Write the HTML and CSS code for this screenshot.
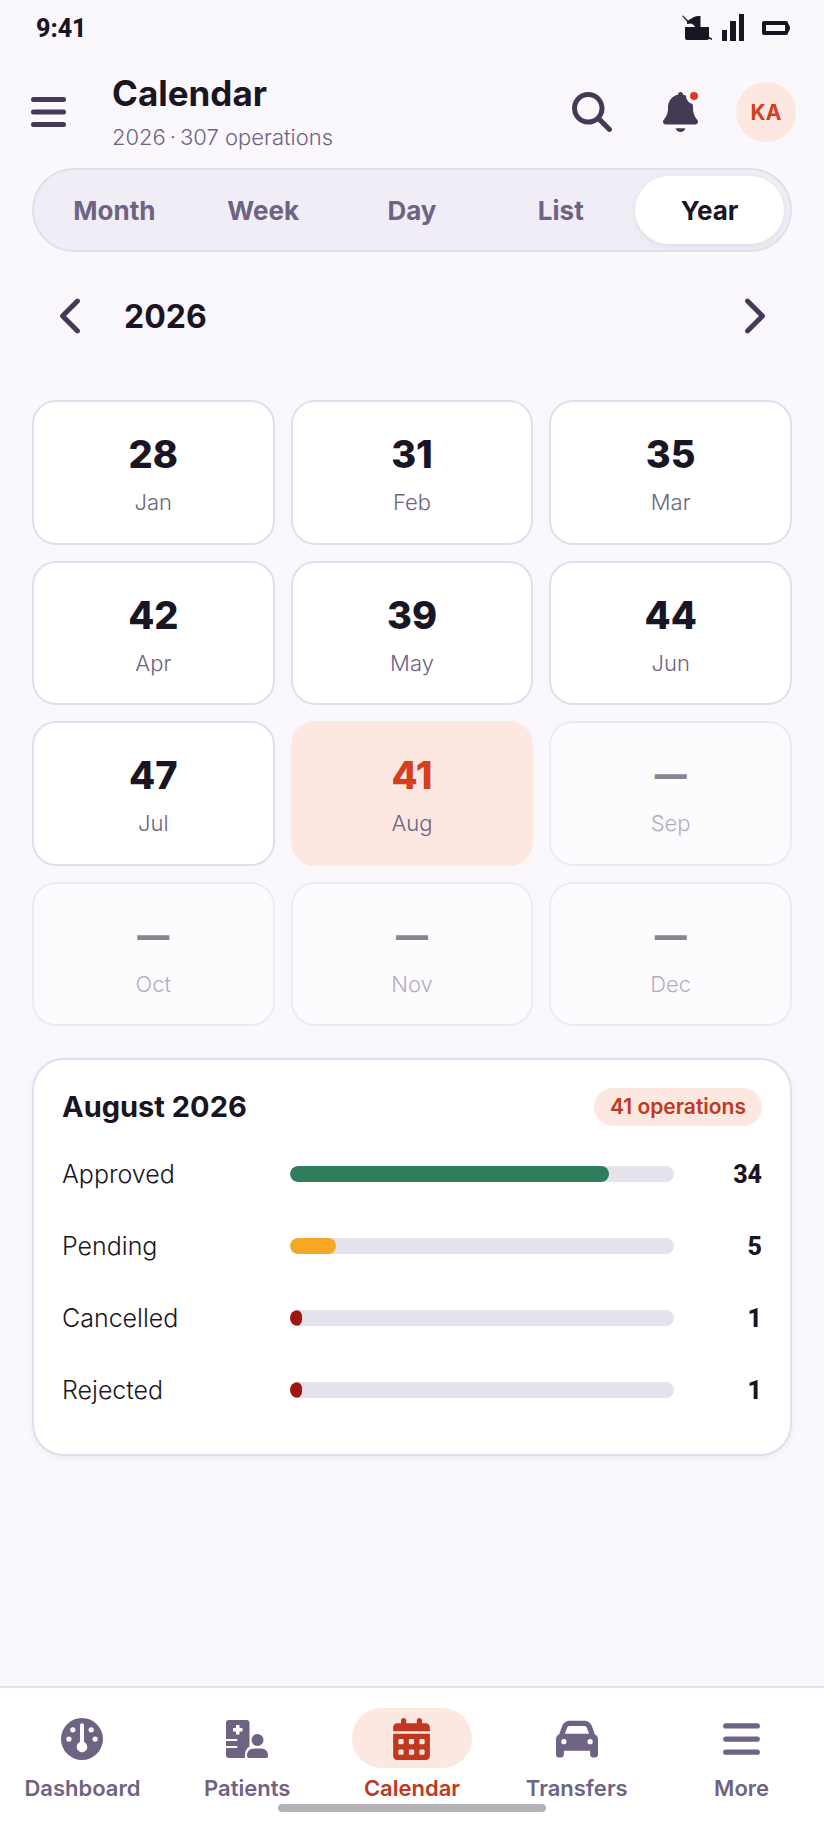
FILE: index.html
```html
<!DOCTYPE html>
<html lang="en">
<head>
  <meta charset="UTF-8">
  <meta name="viewport" content="width=device-width, initial-scale=1">
  <title>Calendar</title>
  <link rel="stylesheet" href="styles.css">
</head>
<body>
  <div class="status">
    <span class="time">9:41</span>
    <div class="status-icons">
      <svg width="30" height="28" viewBox="0 0 30 28"><path d="M0 2L1 1.500 6 6.500 12 3Q15 1.500 18.500 2V13H27V24Q27 26 25 26H5Q3 26 3 24V13H13Q12 10 9 9.500L5 10 5 7.500z"/><path d="M25 21.500l5 3v1.500l-5-2z"/></svg>
      <svg width="22" height="28" viewBox="0 0 22 28"><path d="M0 16h5v11H0zM8 7h6v20H8zM17 0h5v27h-5z"/></svg>
      <svg width="28" height="28" viewBox="0 0 28 28"><path fill-rule="evenodd" d="M2 7h22q2 0 2 2l2 4v2l-2 4q0 2-2 2H2q-2 0-2-2V9q0-2 2-2zM4 11v6h19v-6z"/></svg>
    </div>
  </div>

  <header class="topbar">
    <button class="icon-btn" aria-label="Menu">
      <svg width="35" height="40" viewBox="0 0 448 512"><path d="M32 64h384a32 32 0 0 1 0 64H32a32 32 0 0 1 0-64zm0 160h384a32 32 0 0 1 0 64H32a32 32 0 0 1 0-64zm0 160h384a32 32 0 0 1 0 64H32a32 32 0 0 1 0-64z"/></svg>
    </button>
    <div class="heading">
      <h1>Calendar</h1>
      <p>2026&thinsp;·&thinsp;307 operations</p>
    </div>
    <button class="icon-btn" aria-label="Search">
      <svg width="40" height="40" viewBox="0 0 512 512"><path d="M416 208c0 45.900-14.900 88.300-40 122.700L502.600 457.400c12.500 12.500 12.500 32.800 0 45.300s-32.800 12.500-45.300 0L330.700 376c-34.400 25.200-76.800 40-122.700 40C93.100 416 0 322.900 0 208S93.100 0 208 0S416 93.100 416 208zM208 352a144 144 0 1 0 0-288 144 144 0 1 0 0 288z"/></svg>
    </button>
    <button class="icon-btn" aria-label="Notifications">
      <span class="bell">
        <svg width="35" height="40" viewBox="0 0 448 512"><path d="M224 0c-17.700 0-32 14.300-32 32l0 3.200C119 50 64 114.600 64 192l0 21.700c0 48.100-16.400 94.800-46.400 132.400L7.800 358.300C2.700 364.600 0 372.400 0 380.500 0 400.100 15.900 416 35.500 416l376.900 0c19.600 0 35.500-15.900 35.500-35.500 0-8.100-2.700-15.900-7.800-22.200l-9.800-12.200C400.400 308.500 384 261.800 384 213.700l0-21.700c0-77.400-55-142-128-156.800l0-3.200c0-17.700-14.300-32-32-32zM162 464c7.100 27.600 32.200 48 62 48s54.900-20.400 62-48l-124 0z"/></svg>
        <span class="dot"></span>
      </span>
    </button>
    <button class="avatar">KA</button>
  </header>

  <main>
    <div class="tabs">
      <button>Month</button>
      <button>Week</button>
      <button>Day</button>
      <button>List</button>
      <button class="active">Year</button>
    </div>

    <div class="year-nav">
      <button aria-label="Previous year">
        <svg width="25" height="40" viewBox="0 0 320 512"><path d="M9.400 233.400c-12.500 12.500-12.500 32.800 0 45.300l192 192c12.500 12.500 32.800 12.500 45.300 0s12.500-32.800 0-45.300L77.300 256 246.600 86.600c12.500-12.500 12.500-32.800 0-45.300s-32.800-12.500-45.300 0l-192 192z"/></svg>
      </button>
      <h2>2026</h2>
      <button aria-label="Next year">
        <svg width="25" height="40" viewBox="0 0 320 512"><path d="M310.600 233.400c12.500 12.500 12.500 32.800 0 45.300l-192 192c-12.500 12.500-32.800 12.500-45.300 0s-12.500-32.800 0-45.300L242.700 256 73.400 86.600c-12.500-12.500-12.500-32.800 0-45.300s32.800-12.500 45.300 0l192 192z"/></svg>
      </button>
    </div>

    <div class="months">
      <button class="month"><strong>28</strong><span>Jan</span></button>
      <button class="month"><strong>31</strong><span>Feb</span></button>
      <button class="month"><strong>35</strong><span>Mar</span></button>
      <button class="month"><strong>42</strong><span>Apr</span></button>
      <button class="month"><strong>39</strong><span>May</span></button>
      <button class="month"><strong>44</strong><span>Jun</span></button>
      <button class="month"><strong>47</strong><span>Jul</span></button>
      <button class="month current"><strong>41</strong><span>Aug</span></button>
      <button class="month empty"><strong>—</strong><span>Sep</span></button>
      <button class="month empty"><strong>—</strong><span>Oct</span></button>
      <button class="month empty"><strong>—</strong><span>Nov</span></button>
      <button class="month empty"><strong>—</strong><span>Dec</span></button>
    </div>

    <section class="summary">
      <div class="summary-head">
        <h3>August 2026</h3>
        <span class="badge">41 operations</span>
      </div>
      <div class="row">
        <span>Approved</span>
        <div class="bar"><div class="fill green" style="width: 83%"></div></div>
        <b>34</b>
      </div>
      <div class="row">
        <span>Pending</span>
        <div class="bar"><div class="fill amber" style="width: 12%"></div></div>
        <b>5</b>
      </div>
      <div class="row">
        <span>Cancelled</span>
        <div class="bar"><div class="fill red" style="width: 3%"></div></div>
        <b>1</b>
      </div>
      <div class="row">
        <span>Rejected</span>
        <div class="bar"><div class="fill red" style="width: 3%"></div></div>
        <b>1</b>
      </div>
    </section>
  </main>

  <nav class="bottom-nav">
    <a href="#">
      <span class="nav-icon"><svg width="42" height="42" viewBox="0 0 512 512"><path d="M0 256a256 256 0 1 1 512 0A256 256 0 1 1 0 256zm320 96c0-26.900-16.500-49.900-40-59.300L280 88c0-13.300-10.700-24-24-24s-24 10.700-24 24l0 204.700c-23.500 9.500-40 32.500-40 59.300c0 35.300 28.700 64 64 64s64-28.700 64-64zM144 176a32 32 0 1 0 0-64 32 32 0 1 0 0 64zm-16 80a32 32 0 1 0 -64 0 32 32 0 1 0 64 0zm288 32a32 32 0 1 0 0-64 32 32 0 1 0 0 64zM400 144a32 32 0 1 0 -64 0 32 32 0 1 0 64 0z"/></svg></span>
      Dashboard
    </a>
    <a href="#">
      <span class="nav-icon"><svg width="42" height="38" viewBox="0 0 42 38"><path fill-rule="evenodd" d="M3 0H20.500Q23.500 0 23.500 3V26.500Q19 29 19 35V38H3Q0 38 0 35V28H10.500Q11.500 28 11.500 27T10.500 26H0V21H10.500Q11.500 21 11.500 20T10.500 19H0V3Q0 0 3 0zM10 5V8H7V11.500H10V14.500H13.500V11.500H16.500V8H13.500V5z"/><circle cx="31.500" cy="20" r="6"/><path d="M21 36Q21 28.500 28 28.500H35Q42 28.500 42 36Q42 38 40 38H23Q21 38 21 36z"/></svg></span>
      Patients
    </a>
    <a href="#" class="active">
      <span class="nav-icon"><svg width="37" height="42" viewBox="0 0 448 512"><path d="M128 0c17.700 0 32 14.300 32 32V64H288V32c0-17.700 14.300-32 32-32s32 14.300 32 32V64h48c26.500 0 48 21.500 48 48v48H0V112C0 85.500 21.500 64 48 64H96V32c0-17.700 14.300-32 32-32zM0 192H448V464c0 26.500-21.500 48-48 48H48c-26.500 0-48-21.500-48-48V192zm64 80v32c0 8.800 7.200 16 16 16h32c8.800 0 16-7.200 16-16V272c0-8.800-7.200-16-16-16H80c-8.800 0-16 7.200-16 16zm128 0v32c0 8.800 7.200 16 16 16h32c8.800 0 16-7.200 16-16V272c0-8.800-7.200-16-16-16H208c-8.800 0-16 7.200-16 16zm144-16c-8.800 0-16 7.200-16 16v32c0 8.800 7.200 16 16 16h32c8.800 0 16-7.200 16-16V272c0-8.800-7.200-16-16-16H336zM64 400v32c0 8.800 7.200 16 16 16h32c8.800 0 16-7.200 16-16V400c0-8.800-7.200-16-16-16H80c-8.800 0-16 7.200-16 16zm144-16c-8.800 0-16 7.200-16 16v32c0 8.800 7.200 16 16 16h32c8.800 0 16-7.200 16-16V400c0-8.800-7.200-16-16-16H208zm112 16v32c0 8.800 7.200 16 16 16h32c8.800 0 16-7.200 16-16V400c0-8.800-7.200-16-16-16H336c-8.800 0-16 7.200-16 16z"/></svg></span>
      Calendar
    </a>
    <a href="#">
      <span class="nav-icon"><svg width="42" height="42" viewBox="0 0 512 512"><path d="M135.200 117.400L109.100 192H402.900l-26.100-74.600C372.300 104.600 360.200 96 346.600 96H165.400c-13.600 0-25.700 8.600-30.200 21.400zM39.600 196.800L74.800 96.300C88.300 57.800 124.600 32 165.400 32H346.600c40.800 0 77.100 25.800 90.600 64.300l35.200 100.500c23.200 9.600 39.600 32.500 39.600 59.200V448c0 17.700-14.300 32-32 32H448c-17.700 0-32-14.300-32-32V400H96v48c0 17.700-14.300 32-32 32H32c-17.700 0-32-14.300-32-32V256c0-26.700 16.400-49.600 39.600-59.200zM128 288a32 32 0 1 0 -64 0 32 32 0 1 0 64 0zm288 32a32 32 0 1 0 0-64 32 32 0 1 0 0 64z"/></svg></span>
      Transfers
    </a>
    <a href="#">
      <span class="nav-icon"><svg width="37" height="42" viewBox="0 0 448 512"><path d="M32 64h384a32 32 0 0 1 0 64H32a32 32 0 0 1 0-64zm0 160h384a32 32 0 0 1 0 64H32a32 32 0 0 1 0-64zm0 160h384a32 32 0 0 1 0 64H32a32 32 0 0 1 0-64z"/></svg></span>
      More
    </a>
    <div class="home-bar"></div>
  </nav>
</body>
</html>
```
FILE: styles.css
```css
* {
  box-sizing: border-box;
}
body {
  margin: 0;
  min-height: 100vh;
  display: flex;
  flex-direction: column;
  font-family: Inter, "Liberation Sans", sans-serif;
  background: #faf8fd;
  color: #1a1523;
}
h1, h2, h3, p {
  margin: 0;
}
button {
  padding: 0;
  border: none;
  background: none;
  font-family: inherit;
  color: inherit;
  cursor: pointer;
}
svg {
  display: block;
  fill: currentColor;
}

.status {
  display: flex;
  justify-content: space-between;
  align-items: center;
  height: 56px;
  padding: 0 34px 0 36px;
}
.time {
  font-family: Roboto, sans-serif;
  font-size: 25px;
  font-weight: 800;
}
.status-icons {
  display: flex;
  gap: 10px;
}
.status-icons svg:last-child {
  margin-left: 8px;
}

.topbar {
  display: flex;
  align-items: center;
  height: 112px;
  padding: 0 28px 0 4px;
}
.icon-btn {
  display: flex;
  justify-content: center;
  align-items: center;
  width: 88px;
  height: 88px;
  color: #443a55;
}
.heading {
  flex: 1;
  margin-left: 20px;
}
h1 {
  font-size: 35px;
  line-height: 44px;
}
.heading p {
  font-size: 22px;
  font-weight: 350;
  line-height: 32px;
  margin-top: 6px;
  color: #6e6382;
}
.bell {
  position: relative;
}
.dot {
  position: absolute;
  top: 0;
  right: 0;
  width: 8px;
  height: 8px;
  border-radius: 50%;
  background: #d63e20;
  box-shadow: 0 0 0 4px #faf8fd;
}
.avatar {
  width: 60px;
  height: 60px;
  margin-left: 12px;
  border-radius: 50%;
  background: #fce8e1;
  color: #d63e20;
  font-size: 21px;
  font-weight: 700;
}

main {
  padding: 0 32px;
}
.tabs {
  display: flex;
  height: 84px;
  padding: 6px;
  border: 2px solid #e3deee;
  border-radius: 42px;
  background: #f0edf7;
}
.tabs button {
  flex: 1;
  border-radius: 34px;
  color: #6e6382;
  font-size: 26px;
  font-weight: 700;
}
.tabs .active {
  background: #fff;
  color: #1a1523;
  box-shadow: 0 2px 6px rgba(26, 21, 35, 0.08);
}

.year-nav {
  display: flex;
  align-items: center;
  margin: 24px 0 44px;
}
.year-nav button {
  display: flex;
  justify-content: center;
  align-items: center;
  width: 80px;
  height: 80px;
  color: #443a55;
}
.year-nav h2 {
  flex: 1;
  margin-left: 12px;
  font-size: 32px;
}

.months {
  display: grid;
  grid-template-columns: repeat(3, 1fr);
  grid-auto-rows: 1fr;
  gap: 16px;
  min-height: 626px;
}
.month {
  display: flex;
  flex-direction: column;
  justify-content: center;
  align-items: center;
  gap: 8px;
  padding-top: 4px;
  border: 2px solid #e3deee;
  border-radius: 24px;
  background: #fff;
}
.month strong {
  font-size: 38px;
  font-weight: 800;
  line-height: 48px;
}
.month span {
  font-size: 22px;
  font-weight: 350;
  line-height: 32px;
  color: #6e6382;
}
.month.current {
  border-color: #fce8e1;
  background: #fce8e1;
}
.month.current strong {
  color: #d63e20;
}
.month.empty {
  opacity: 0.5;
}
.month.empty strong {
  font-size: 32px;
  font-weight: 900;
}

.summary {
  margin: 32px 0;
  padding: 28px;
  border: 2px solid #e3deee;
  border-radius: 32px;
  background: #fff;
  box-shadow: 0 2px 6px rgba(26, 21, 35, 0.06);
}
.summary-head {
  display: flex;
  justify-content: space-between;
  align-items: center;
  margin-bottom: 12px;
}
h3 {
  font-size: 29px;
  line-height: 38px;
}
.badge {
  padding: 0 16px;
  border-radius: 19px;
  background: #fce8e1;
  color: #c03820;
  font-size: 21px;
  font-weight: 600;
  line-height: 38px;
}
.row {
  display: grid;
  grid-template-columns: 212px 1fr 72px;
  column-gap: 16px;
  align-items: center;
  height: 72px;
  font-size: 25px;
  font-weight: 350;
}
.row b {
  font-family: Roboto, sans-serif;
  font-size: 25px;
  font-weight: 800;
  text-align: right;
}
.bar {
  height: 16px;
  border-radius: 8px;
  background: #e5e2ec;
  overflow: hidden;
}
.fill {
  height: 16px;
  border-radius: 8px;
}
.green {
  background: #2f7d5b;
}
.amber {
  background: #f6a724;
}
.red {
  background: #a01510;
}

.bottom-nav {
  position: relative;
  display: flex;
  margin-top: auto;
  padding: 20px 0 30px;
  border-top: 2px solid #e6dff2;
  background: #fff;
}
.bottom-nav a {
  flex: 1;
  display: flex;
  flex-direction: column;
  align-items: center;
  gap: 8px;
  color: #6e6382;
  font-size: 22px;
  font-weight: 600;
  line-height: 24px;
  text-decoration: none;
}
.nav-icon {
  display: flex;
  justify-content: center;
  align-items: center;
  width: 120px;
  height: 60px;
  padding-top: 2px;
  border-radius: 30px;
}
.bottom-nav .active {
  color: #c03820;
}
.active .nav-icon {
  background: #fce8e1;
}
.home-bar {
  position: absolute;
  bottom: 18px;
  left: 50%;
  width: 268px;
  height: 8px;
  margin-left: -134px;
  border-radius: 4px;
  background: #b5b3b9;
}
```
